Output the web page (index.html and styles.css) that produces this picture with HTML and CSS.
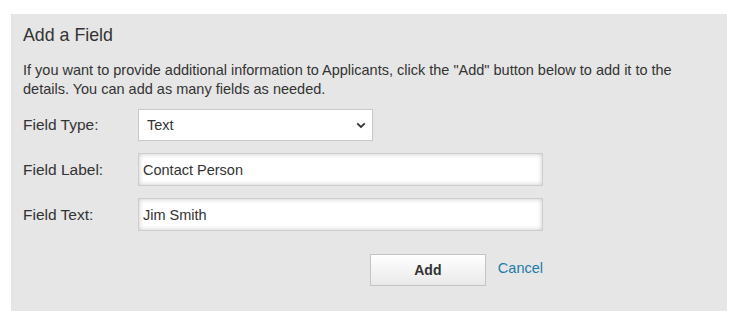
FILE: index.html
```html
<!DOCTYPE html>
<html lang="en">
<head>
    <meta charset="UTF-8">
    <meta name="viewport" content="width=device-width, initial-scale=1.0">
    <title>Add a Field</title>
    <link rel="stylesheet" href="styles.css">
</head>
<body>
    <div class="panel">
        <h2>Add a Field</h2>
        <p class="intro">If you want to provide additional information to Applicants, click the "Add" button below to add it to the details. You can add as many fields as needed.</p>

        <form class="field-form">
            <div class="form-row">
                <label for="fieldType">Field Type:</label>
                <div class="select-wrap">
                    <select id="fieldType" name="fieldType">
                        <option>Text</option>
                        <option>Link</option>
                        <option>Date</option>
                    </select>
                    <svg class="chevron" width="10" height="7" viewBox="0 0 10 7"><path d="M1.2 1.4 L5 5 L8.8 1.4" fill="none" stroke="#333" stroke-width="1.8"/></svg>
                </div>
            </div>
            <div class="form-row">
                <label for="fieldLabel">Field Label:</label>
                <input type="text" id="fieldLabel" name="fieldLabel" value="Contact Person">
            </div>
            <div class="form-row">
                <label for="fieldText">Field Text:</label>
                <input type="text" id="fieldText" name="fieldText" value="Jim Smith">
            </div>
            <div class="form-actions">
                <button type="button" class="add-btn">Add</button>
                <a href="#" class="cancel-link">Cancel</a>
            </div>
        </form>
    </div>
</body>
</html>
```

FILE: styles.css
```css
* {
    margin: 0;
    padding: 0;
    box-sizing: border-box;
}
body {
    font-family: "Liberation Sans", Arial, sans-serif;
    background: #fff;
    color: #333;
    padding: 14px 11px;
}
.panel {
    width: 716px;
    height: 297px;
    background: #e6e6e6;
    padding: 10px 12px 0;
}
h2 {
    font-size: 17.8px;
    font-weight: normal;
    line-height: 22px;
    color: #333;
}
.intro {
    margin-top: 15px;
    font-size: 14.5px;
    line-height: 19px;
}
.field-form {
    margin-top: 10px;
}
.form-row {
    display: flex;
    align-items: center;
    margin-bottom: 12px;
}
.form-row label {
    width: 115px;
    font-size: 15.5px;
    color: #333;
}
.select-wrap {
    position: relative;
    width: 235px;
}
.select-wrap select {
    appearance: none;
    -webkit-appearance: none;
    width: 100%;
    height: 32px;
    padding: 0 8px;
    border: 1px solid #c9c9c9;
    background: #fff;
    font-family: inherit;
    font-size: 14.5px;
    color: #333;
}
.chevron {
    position: absolute;
    right: 7px;
    top: 13px;
    pointer-events: none;
}
.form-row input {
    width: 405px;
    height: 33px;
    padding: 0 4px;
    border: 1px solid #cdcdcd;
    background: #fff;
    box-shadow: inset 0 0 5px rgba(0,0,0,0.22);
    font-family: inherit;
    font-size: 14.5px;
    color: #333;
}
.form-actions {
    width: 520px;
    display: flex;
    justify-content: flex-end;
    align-items: center;
    margin-top: 23px;
}
.add-btn {
    width: 116px;
    height: 32px;
    border: 1px solid #c4c4c4;
    background: linear-gradient(#ffffff, #e9e9e9);
    font-family: inherit;
    font-size: 14px;
    font-weight: bold;
    color: #333;
    cursor: pointer;
}
.cancel-link {
    margin-left: 12px;
    margin-bottom: 4px;
    font-size: 14.5px;
    color: #1e7ba6;
    text-decoration: none;
}
```
